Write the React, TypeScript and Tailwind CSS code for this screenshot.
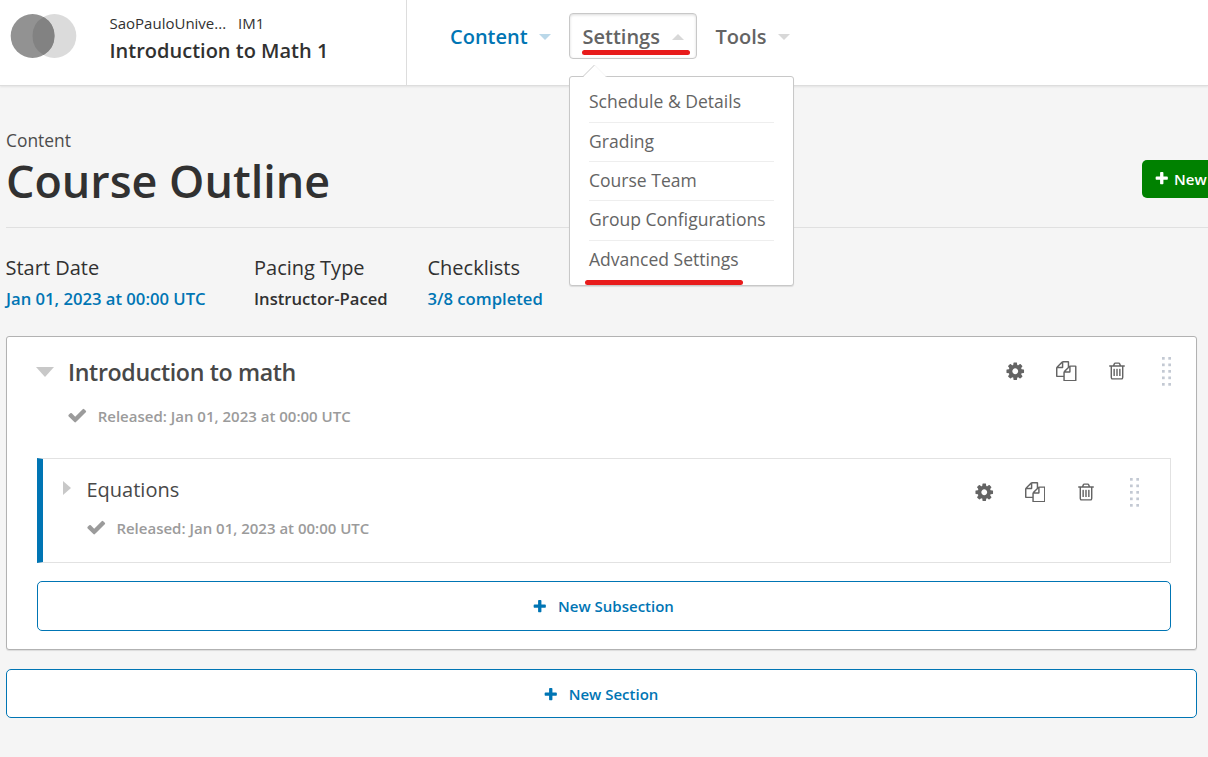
import React from "react";

const PLUS =
  "M1600 736v192q0 40-28 68t-68 28h-416v416q0 40-28 68t-68 28h-192q-40 0-68-28t-28-68v-416h-416q-40 0-68-28t-28-68v-192q0-40 28-68t68-28h416v-416q0-40 28-68t68-28h192q40 0 68 28t28 68v416h416q40 0 68 28t28 68z";
const CHECK =
  "M1671 566q0 40-28 68l-724 724-136 136q-28 28-68 28t-68-28l-136-136-362-362q-28-28-28-68t28-68l136-136q28-28 68-28t68 28l294 295 656-657q28-28 68-28t68 28l136 136q28 28 28 68z";
const COG =
  "M1152 896q0-106-75-181t-181-75-181 75-75 181 75 181 181 75 181-75 75-181zm512-109v222q0 12-8 23t-20 13l-185 28q-19 54-39 91 35 50 107 138 10 12 10 25t-9 23q-27 37-99 108t-94 71q-12 0-26-9l-138-108q-44 23-91 38-16 136-29 186-7 28-36 28h-222q-14 0-24.5-8.5t-11.5-21.5l-28-184q-49-16-90-37l-141 107q-10 9-25 9-14 0-25-11-126-114-165-168-7-10-7-23 0-12 8-23 15-21 51-66.5t54-70.5q-27-50-41-99l-183-27q-13-2-21-12.5t-8-23.5v-222q0-12 8-23t19-13l186-28q14-46 39-92-40-57-107-138-10-12-10-24 0-10 9-23 26-36 98.5-107.5t94.5-71.5q13 0 26 10l138 107q44-23 91-38 16-136 29-186 7-28 36-28h222q14 0 24.5 8.5t11.5 21.5l28 184q49 16 90 37l142-107q9-9 24-9 13 0 25 10 129 119 165 170 7 8 7 22 0 12-8 23-15 21-51 66.5t-54 70.5q26 50 41 98l183 28q13 2 21 12.5t8 23.5z";
const FILES =
  "M1696 384q40 0 68 28t28 68v1216q0 40-28 68t-68 28h-960q-40 0-68-28t-28-68v-288h-544q-40 0-68-28t-28-68v-672q0-40 20-88t48-76l408-408q28-28 76-48t88-20h416q40 0 68 28t28 68v328q68-40 128-40h416zm-544 213l-299 299h299v-299zm-640-384l-299 299h299v-299zm196 647l316-316v-416h-384v416q0 40-28 68t-68 28h-416v640h512v-256q0-40 20-88t48-76zm956 804v-1152h-384v416q0 40-28 68t-68 28h-416v640h896z";
const TRASH =
  "M704 736v576q0 14-9 23t-23 9h-64q-14 0-23-9t-9-23v-576q0-14 9-23t23-9h64q14 0 23 9t9 23zm256 0v576q0 14-9 23t-23 9h-64q-14 0-23-9t-9-23v-576q0-14 9-23t23-9h64q14 0 23 9t9 23zm256 0v576q0 14-9 23t-23 9h-64q-14 0-23-9t-9-23v-576q0-14 9-23t23-9h64q14 0 23 9t9 23zm128 724v-948h-896v948q0 22 7 40.5t14.5 27 10.5 8.5h832q3 0 10.5-8.5t14.5-27 7-40.5zm-672-1076h448l-48-117q-7-9-17-11h-317q-10 2-17 11zm928 32v64q0 14-9 23t-23 9h-96v948q0 83-47 143.5t-113 60.5h-832q-66 0-113-58.5t-47-141.5v-952h-96q-14 0-23-9t-9-23v-64q0-14 9-23t23-9h309l70-167q15-37 54-63t79-26h320q40 0 79 26t54 63l70 167h309q14 0 23 9t9 23z";

function Icon({ d, className }: { d: string; className: string }) {
  return (
    <svg viewBox="0 0 1792 1792" className={`shrink-0 fill-current ${className}`} aria-hidden="true">
      <path d={d} />
    </svg>
  );
}

function Caret({ up = false, className }: { up?: boolean; className: string }) {
  return (
    <svg viewBox="0 0 12 6" className={`h-[6px] w-[12px] shrink-0 fill-current ${className}`} aria-hidden="true">
      <path d={up ? "M0 6L6 0L12 6z" : "M0 0H12L6 6z"} />
    </svg>
  );
}

function DragHandle() {
  return (
    <svg viewBox="0 0 10 29" className="h-[29px] w-[10px] fill-[#c3c9d3]" aria-hidden="true">
      {[0, 6.5, 13, 19.5, 26].map((y) => (
        <g key={y}>
          <rect x="0" y={y} width="2.7" height="2.7" />
          <rect x="6.3" y={y} width="2.7" height="2.7" />
        </g>
      ))}
    </svg>
  );
}

function Actions() {
  return (
    <div className="flex items-center text-[#646464]">
      <Icon d={COG} className="h-[20.5px] w-[20.5px]" />
      <Icon d={FILES} className="ml-[30.5px] h-[20.5px] w-[20.5px]" />
      <Icon d={TRASH} className="ml-[30.5px] h-[20px] w-[20px]" />
      <div className="ml-[34.2px]">
        <DragHandle />
      </div>
    </div>
  );
}

function Released() {
  return (
    <div className="flex h-[20px] items-center text-[#9b9b9b]">
      <Icon d={CHECK} className="mt-[-2px] -ml-[0.8px] h-[20.5px] w-[20.5px]" />
      <span className="ml-[10px] text-[15px] leading-[20px] font-semibold whitespace-nowrap">
        Released: Jan 01, 2023 at 00:00 UTC
      </span>
    </div>
  );
}

const menuItems = ["Schedule & Details", "Grading", "Course Team", "Group Configurations", "Advanced Settings"];

function SettingsMenu() {
  return (
    <div className="absolute top-[62px] left-[-1px] z-10 h-[210px] w-[225px] rounded-[3px] border border-[#c8c8c8] bg-white px-[19px] pt-[6.2px] shadow-[0_1px_1px_rgba(0,0,0,0.1)]">
      <svg viewBox="0 0 26 14" className="absolute top-[-13px] left-[12px] h-[14px] w-[26px]" aria-hidden="true">
        <path d="M0 14L12.5 1L25 14z" fill="white" />
        <path d="M0.5 13L12.5 1" stroke="#c8c8c8" fill="none" />
        <path d="M12.5 1L24.5 13" stroke="#eeeeee" strokeWidth="0.6" fill="none" />
      </svg>
      <ul className="divide-y divide-[#eeeeee]">
        {menuItems.map((item) => (
          <li key={item} className="h-[39.4px] text-[17.55px] leading-[36px] whitespace-nowrap text-[#646464]">
            {item}
          </li>
        ))}
      </ul>
      <div className="absolute top-[203px] left-[14.5px] h-[5px] w-[158px] rounded-full bg-[#e81c1c]" />
    </div>
  );
}

function Header() {
  return (
    <header className="flex h-[86px] border-b border-[#dddddd] bg-white shadow-[0_1px_2px_rgba(0,0,0,0.08)]">
      <div className="flex w-[407px] border-r border-[#dddddd] pl-[10px]">
        <svg viewBox="0 0 68 46" className="mt-[13px] h-[46px] w-[68px]" aria-hidden="true">
          <circle cx="44.4" cy="23" r="21.9" fill="#dbdbdb" />
          <circle cx="22.6" cy="23" r="21.9" fill="#929292" />
          <path d="M33.5 4A21.9 21.9 0 0 1 33.5 42A21.9 21.9 0 0 1 33.5 4z" fill="#828282" />
        </svg>
        <div className="ml-[31.5px] pt-[13px] text-[#313131]">
          <div className="flex gap-[12px] text-[15px] leading-[20px]">
            <span>SaoPauloUnive...</span>
            <span>IM1</span>
          </div>
          <div className="mt-[5px] text-[20px] leading-[26px] font-semibold whitespace-nowrap">Introduction to Math 1</div>
        </div>
      </div>
      <nav className="flex pt-[13px] text-[20px] leading-[46px] font-semibold text-[#646464]">
        <div className="ml-[43px] flex h-[46px] items-center text-[#0075b4]">
          <span className="w-[88.5px] pt-[2px]">Content</span>
          <Caret className="mt-[2px] text-[#bad8e9]" />
        </div>
        <div className="relative ml-[18.5px] flex h-[46px] w-[128px] items-center rounded-[4px] border border-[#c8c8c8] pl-[12.5px] shadow-[inset_0_1px_3px_rgba(0,0,0,0.15)]">
          <span className="w-[89px] pt-[2px]">Settings</span>
          <Caret up className="mt-px text-[#d8d8d8]" />
          <div className="absolute top-[36px] left-[12px] h-[5px] w-[108px] rounded-full bg-[#e81c1c]" />
          <div className="absolute top-0 left-0 font-normal">
            <SettingsMenu />
          </div>
        </div>
        <div className="ml-[18.5px] flex h-[46px] items-center">
          <span className="w-[62px] pt-[2px]">Tools</span>
          <Caret className="mt-[2px] text-[#d8d8d8]" />
        </div>
      </nav>
    </header>
  );
}

function AddButton({ label, className }: { label: string; className: string }) {
  return (
    <button
      className={`flex items-center justify-center rounded-[5px] border border-[#0075b4] bg-white pr-[2px] text-[15px] font-semibold text-[#0075b4] ${className}`}
    >
      <Icon d={PLUS} className="mt-[2px] h-[15.5px] w-[15.5px]" />
      <span className="ml-[10.5px] whitespace-nowrap">{label}</span>
    </button>
  );
}

export default function App() {
  return (
    <div className="h-[757px] w-[1208px] overflow-hidden bg-[#f5f5f5] font-['Open_Sans',sans-serif]">
      <Header />
      <main className="pl-[6px]">
        <div className="flex h-[142px] justify-between border-b border-[#e0e0e0]">
          <div className="pt-[41px]">
            <div className="text-[17.4px] leading-[26px] text-[#4c4c4c]">Content</div>
            <h1 className="-mt-px text-[44.9px] leading-[58px] font-semibold whitespace-nowrap text-[#313131]">Course Outline</h1>
          </div>
          <button className="mt-[74px] flex h-[38px] w-[66px] items-center rounded-l-[5px] bg-[#008100] pl-[12px] text-[15px] font-semibold text-white">
            <Icon d={PLUS} className="h-[15.5px] w-[15.5px]" />
            <span className="ml-[4.5px]">New</span>
          </button>
        </div>

        <div className="flex h-[108px] pt-[26px] text-[#313131]">
          <div className="w-[248px]">
            <div className="-ml-[0.5px] text-[20px] leading-[28px]">Start Date</div>
            <div className="mt-[4px] text-[16.65px] leading-[26px] font-semibold text-[#0075b4]">Jan 01, 2023 at 00:00 UTC</div>
          </div>
          <div className="w-[173.5px]">
            <div className="text-[20px] leading-[28px]">Pacing Type</div>
            <div className="mt-[4px] text-[16.65px] leading-[26px] font-semibold">Instructor-Paced</div>
          </div>
          <div>
            <div className="text-[20px] leading-[28px]">Checklists</div>
            <div className="mt-[4px] text-[16.65px] leading-[26px] font-semibold text-[#0075b4]">3/8 completed</div>
          </div>
        </div>

        <section className="h-[314px] w-[1191px] rounded-[3px] border border-[#b2b2b2] bg-white px-[30px] shadow-[0_1px_1px_rgba(0,0,0,0.1)]">
          <div className="flex h-[121px] justify-between">
            <div>
              <div className="flex items-center pt-[18px]">
                <svg viewBox="0 0 18 10" className="-ml-px h-[10px] w-[18px] fill-[#c8c8c8]" aria-hidden="true">
                  <path d="M0 0H18L9 10z" />
                </svg>
                <h2 className="ml-[14px] text-[23.2px] leading-[34px] font-semibold tracking-[-0.36px] whitespace-nowrap text-[#484848]">
                  Introduction to math
                </h2>
              </div>
              <div className="mt-[17px] ml-[31px]">
                <Released />
              </div>
            </div>
            <div className="mt-[19.5px] -mr-[5.5px]">
              <Actions />
            </div>
          </div>

          <div className="flex h-[105px] w-[1134px] justify-between border border-l-[6px] border-[#e2e2e2] border-l-[#0075b4]">
            <div>
              <div className="flex items-center pt-[15px] pl-[20px]">
                <svg viewBox="0 0 8 14" className="-mt-[4px] h-[14px] w-[8px] fill-[#c8c8c8]" aria-hidden="true">
                  <path d="M0 0V14L8 7z" />
                </svg>
                <h3 className="ml-[15.5px] text-[20px] leading-[32px] text-[#484848]">Equations</h3>
              </div>
              <div className="mt-[12px] ml-[43.7px]">
                <Released />
              </div>
            </div>
            <div className="mt-[18.5px] mr-[30px]">
              <Actions />
            </div>
          </div>

          <AddButton label="New Subsection" className="mt-[18px] h-[50px] w-[1134px]" />
        </section>

        <AddButton label="New Section" className="mt-[19px] h-[49px] w-[1191px] pt-px" />
      </main>
    </div>
  );
}
